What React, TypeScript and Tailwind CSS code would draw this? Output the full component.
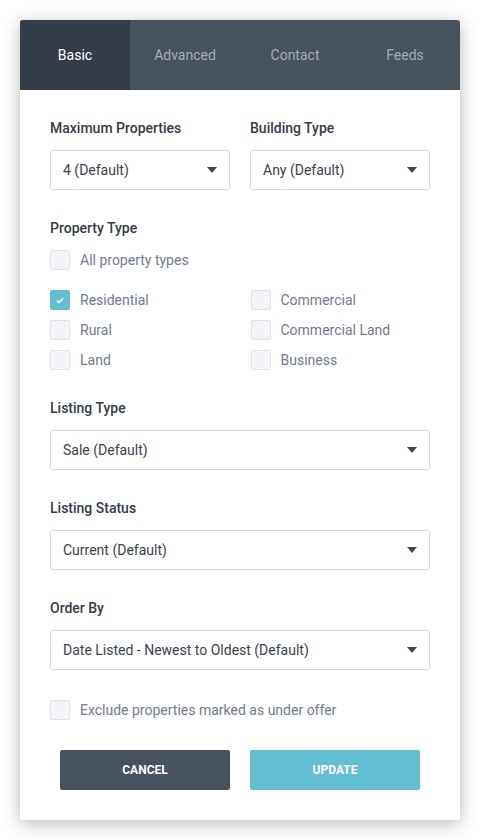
import React from "react";

const font = { fontFamily: "Roboto, 'Liberation Sans', sans-serif" };

function Caret() {
  return (
    <svg width="10" height="6" viewBox="0 0 10 6" className="shrink-0">
      <path d="M0 0h10L5 6z" fill="#3d4653" />
    </svg>
  );
}

function Select({ value }: { value: string }) {
  return (
    <div className="flex h-10 items-center justify-between rounded-[2px] border border-[#d7dde4] bg-white pl-3 pr-3 text-[14px] text-[#3a4350]">
      <span>{value}</span>
      <Caret />
    </div>
  );
}

function Check({ label, checked = false }: { label: string; checked?: boolean }) {
  return (
    <label className="flex h-5 items-center gap-[10px] text-[14px] text-[#6f7c8e]">
      {checked ? (
        <span className="flex h-5 w-5 items-center justify-center rounded-[2px] bg-[#62bfd3]">
          <svg width="8" height="7" viewBox="0 0 8 7">
            <path d="M1 3.6l2 2L7 1.2" stroke="#fff" strokeWidth="1.6" fill="none" />
          </svg>
        </span>
      ) : (
        <span className="h-5 w-5 rounded-[2px] border border-[#dfe3e8] bg-[#f3f5f8]" />
      )}
      <span>{label}</span>
    </label>
  );
}

function Label({ children }: { children: React.ReactNode }) {
  return <p className="mb-[12px] text-[14px] font-medium leading-5 text-[#333c49]">{children}</p>;
}

export default function App() {
  const tabs = ["Basic", "Advanced", "Contact", "Feeds"];
  return (
    <div className="min-h-[840px] w-[480px] bg-white p-5" style={font}>
      <div className="overflow-hidden rounded-[3px] bg-white shadow-[0_4px_18px_rgba(0,0,0,0.28)]">
        <div className="flex h-[70px] bg-[#47525f]">
          {tabs.map((t, i) => (
            <div
              key={t}
              className={
                i === 0
                  ? "flex w-[110px] items-center justify-center bg-[#343d4a] text-[14px] text-white"
                  : "flex w-[110px] items-center justify-center text-[14px] text-[#a4adb8]"
              }
            >
              {t}
            </div>
          ))}
        </div>

        <div className="px-[30px] pb-[30px] pt-[28px]">
          <div className="grid grid-cols-2 gap-5">
            <div>
              <Label>Maximum Properties</Label>
              <Select value="4 (Default)" />
            </div>
            <div>
              <Label>Building Type</Label>
              <Select value="Any (Default)" />
            </div>
          </div>

          <div className="mt-[28px]">
            <Label>Property Type</Label>
            <Check label="All property types" />
            <div className="mt-5 grid grid-cols-2 gap-x-[21px] gap-y-[10px]">
              <Check label="Residential" checked />
              <Check label="Commercial" />
              <Check label="Rural" />
              <Check label="Commercial Land" />
              <Check label="Land" />
              <Check label="Business" />
            </div>
          </div>

          <div className="mt-[28px]">
            <Label>Listing Type</Label>
            <Select value="Sale (Default)" />
          </div>

          <div className="mt-[28px]">
            <Label>Listing Status</Label>
            <Select value="Current (Default)" />
          </div>

          <div className="mt-[28px]">
            <Label>Order By</Label>
            <Select value="Date Listed - Newest to Oldest (Default)" />
          </div>

          <div className="mt-[30px]">
            <Check label="Exclude properties marked as under offer" />
          </div>

          <div className="mt-[30px] grid grid-cols-2 gap-5 px-[10px]">
            <button className="h-10 rounded-[2px] bg-[#47525f] text-[12px] font-bold uppercase text-white">
              Cancel
            </button>
            <button className="h-10 rounded-[2px] bg-[#62bfd3] text-[12px] font-bold uppercase text-white">
              Update
            </button>
          </div>
        </div>
      </div>
    </div>
  );
}
